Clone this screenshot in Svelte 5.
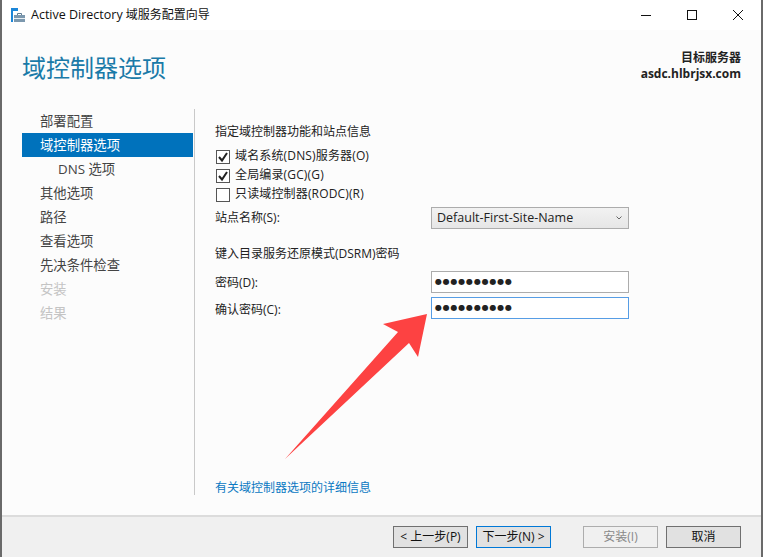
<script lang="ts">
  const steps = [
    { label: '部署配置' },
    { label: '域控制器选项', active: true },
    { label: 'DNS 选项', sub: true },
    { label: '其他选项' },
    { label: '路径' },
    { label: '查看选项' },
    { label: '先决条件检查' },
    { label: '安装', disabled: true },
    { label: '结果', disabled: true }
  ];
  const roles = [
    { label: '域名系统(DNS)服务器(O)', checked: true },
    { label: '全局编录(GC)(G)', checked: true },
    { label: '只读域控制器(RODC)(R)', checked: false }
  ];
  const dots = '●●●●●●●●●●';
</script>

<div class="window">
  <header class="titlebar">
    <svg class="app-icon" width="15" height="15" viewBox="0 0 15 15">
      <rect x="0" y="0" width="7" height="3" fill="#1c86d8" />
      <rect x="0" y="3" width="2" height="11" fill="#1c86d8" />
      <rect x="3" y="7" width="11" height="7" fill="#7c98ae" />
      <rect x="3" y="10" width="11" height="1" fill="#e8eef2" />
      <path d="M6.5 7V5.5h4V7" fill="none" stroke="#5f7d94" />
    </svg>
    <span class="title"><span class="latin">Active Directory</span> 域服务配置向导</span>
    <div class="controls">
      <svg width="12" height="12" viewBox="0 0 12 12"><path d="M1 6.5h10" stroke="#111" fill="none" /></svg>
      <svg width="12" height="12" viewBox="0 0 12 12"><rect x="1.5" y="1.5" width="9" height="9" stroke="#111" fill="none" /></svg>
      <svg width="12" height="12" viewBox="0 0 12 12"><path d="M1 1l10 10M11 1L1 11" stroke="#111" fill="none" /></svg>
    </div>
  </header>

  <div class="head">
    <h1>域控制器选项</h1>
    <div class="target">
      <div>目标服务器</div>
      <div class="host">asdc.hlbrjsx.com</div>
    </div>
  </div>

  <div class="body">
    <nav>
      {#each steps as step}
        <div class="step" class:active={step.active} class:sub={step.sub} class:disabled={step.disabled}>{step.label}</div>
      {/each}
    </nav>

    <main>
      <p class="section">指定域控制器功能和站点信息</p>
      <div class="roles">
        {#each roles as role}
          <div class="role">
            <span class="box">
              {#if role.checked}
                <svg width="12" height="12" viewBox="0 0 12 12"><path d="M2 6l3 3.5L10 2" fill="none" stroke="#222" stroke-width="2" /></svg>
              {/if}
            </span>
            <span class="role-label">{role.label}</span>
          </div>
        {/each}
      </div>
      <div class="row site">
        <span>站点名称(S):</span>
        <div class="select">
          Default-First-Site-Name
          <svg width="6" height="4" viewBox="0 0 6 4"><path d="M0.5 0.5l2.5 2.5 2.5-2.5" fill="none" stroke="#666" /></svg>
        </div>
      </div>
      <p class="section dsrm">键入目录服务还原模式(DSRM)密码</p>
      <div class="row pw">
        <span>密码(D):</span>
        <div class="input"><span class="dots">{dots}</span></div>
      </div>
      <div class="row pw2">
        <span>确认密码(C):</span>
        <div class="input focus"><span class="dots">{dots}</span></div>
      </div>
      <span class="link">有关域控制器选项的详细信息</span>
    </main>
  </div>

  <footer>
    <div class="btn">&lt; 上一步(P)</div>
    <div class="btn primary">下一步(N) &gt;</div>
    <div class="btn off">安装(I)</div>
    <div class="btn">取消</div>
  </footer>

  <svg class="arrow" width="764" height="557" viewBox="0 0 764 557">
    <polygon points="427,314 383,324 398,332 285,459 409,343 418,357" fill="#fd4242" />
  </svg>
</div>

<style>
  :global(body) { margin: 0; background: #fff; }
  .window {
    position: relative;
    width: 764px;
    height: 557px;
    box-sizing: border-box;
    display: flex;
    flex-direction: column;
    padding-left: 2px;
    padding-right: 3px;
    background: #fcfcfc;
    color: #222;
    font: 12px/18px "Open Sans", "Noto Sans CJK SC", sans-serif;
    overflow: hidden;
    box-shadow: inset 2px 0 0 #6a6a6a, inset -1px 0 0 #fff, inset -3px 0 0 #6a6a6a;
  }
  .titlebar { height: 30px; display: flex; align-items: center; background: #fff; padding-left: 9px; }
  .app-icon { margin-right: 5px; }
  .title { color: #111; font-size: 12px; }
  .latin { font-size: 12.5px; }
  .controls { margin-left: auto; display: flex; gap: 34px; padding-right: 17px; }
  .head { height: 79px; display: flex; justify-content: space-between; padding: 0 20px; box-sizing: border-box; }
  h1 { margin: 20px 0 0; font-size: 24px; font-weight: 400; line-height: 36px; color: #1a7aa8; }
  .target { padding-top: 20px; text-align: right; font-weight: 600; line-height: 16px; color: #222; }
  .host { font-weight: 700; }
  .body { flex: 1; display: flex; min-height: 0; padding-bottom: 20px; }
  nav { width: 171px; margin-left: 20px; margin-right: 1px; font-size: 13.33px; }
  .step { height: 24px; line-height: 24px; padding-left: 18px; color: #444; }
  .step.active { background: #0072bc; color: #fff; }
  .step.sub { padding-left: 36px; }
  .step.disabled { color: #c4c4c4; }
  main { flex: 1; border-left: 1px solid #c9c9c9; padding: 14px 0 0 20px; display: flex; flex-direction: column; min-width: 0; }
  p { margin: 0; }
  .section { line-height: 18px; }
  .roles { margin-top: 7px; display: flex; flex-direction: column; gap: 1px; }
  .role { height: 18px; display: flex; align-items: center; gap: 5px; }
  .role-label { letter-spacing: 0.15px; margin-top: -2px; }
  .box { width: 12px; height: 12px; margin-left: 1px; border: 1px solid #555; background: #fff; display: block; flex: none; }
  .box svg { display: block; }
  .row { display: flex; align-items: center; }
  .row > span { width: 216px; flex: none; }
  .site { margin-top: 3px; }
  .select {
    width: 198px;
    height: 22px;
    box-sizing: border-box;
    padding: 0 6px 0 5px;
    display: flex;
    align-items: center;
    justify-content: space-between;
    border: 1px solid #acacac;
    background: linear-gradient(#f2f2f2, #e6e6e6);
    font-size: 12.5px;
  }
  .dsrm { margin-top: 16px; }
  .pw { margin-top: 8px; }
  .pw > span { padding-top: 2px; }
  .pw2 { margin-top: 4px; }
  .pw2 > span { padding-top: 4px; }
  .input {
    width: 198px;
    height: 22px;
    box-sizing: border-box;
    padding-left: 3px;
    display: flex;
    align-items: center;
    border: 1px solid #acacac;
    background: #fff;
  }
  .input.focus { border-color: #569de5; }
  .dots { font: 8px/1 "DejaVu Sans", sans-serif; letter-spacing: 0.8px; color: #222; }
  .link { margin-top: auto; margin-bottom: -2px; color: #0a78c2; line-height: 18px; }
  footer {
    height: 42px;
    box-sizing: border-box;
    display: flex;
    align-items: center;
    padding-left: 391px;
    background: #f0f0f0;
    border-top: 2px solid #dcdcdc;
  }
  .btn {
    width: 75px;
    height: 22px;
    box-sizing: border-box;
    display: flex;
    align-items: center;
    justify-content: center;
    background: #e1e1e1;
    border: 1px solid #707070;
    color: #111;
    white-space: pre;
  }
  .btn + .btn { margin-left: 8px; }
  .btn.primary { border-color: #0078d7; }
  .btn.off { margin-left: 32px; background: #f0f0f0; border-color: #adadad; color: #888; }
  .arrow { position: absolute; left: 0; top: 0; pointer-events: none; }
</style>
